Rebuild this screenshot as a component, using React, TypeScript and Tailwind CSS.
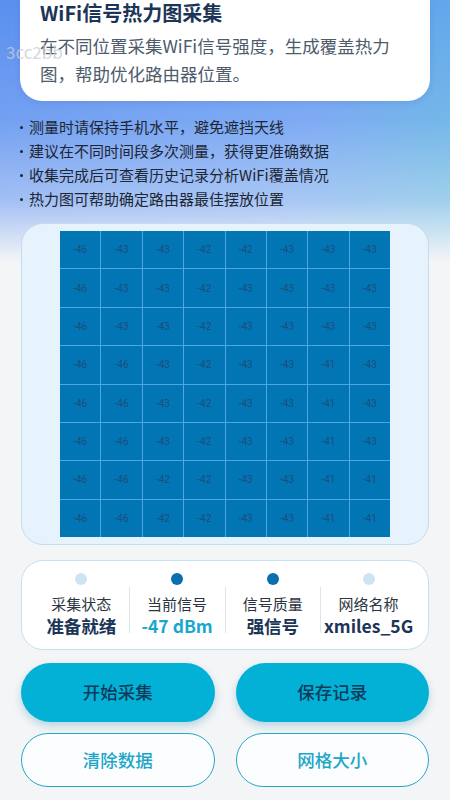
import React from "react";

const GRID: number[][] = [
  [-46, -43, -43, -42, -42, -43, -43, -43],
  [-46, -43, -43, -42, -43, -43, -43, -43],
  [-46, -43, -43, -42, -43, -43, -43, -43],
  [-46, -46, -43, -42, -43, -43, -41, -43],
  [-46, -46, -43, -42, -43, -43, -41, -43],
  [-46, -46, -43, -42, -43, -43, -41, -43],
  [-46, -46, -42, -42, -43, -43, -41, -41],
  [-46, -46, -42, -42, -43, -43, -41, -41],
];

const TIPS = [
  "测量时请保持手机水平，避免遮挡天线",
  "建议在不同时间段多次测量，获得更准确数据",
  "收集完成后可查看历史记录分析WiFi覆盖情况",
  "热力图可帮助确定路由器最佳摆放位置",
];

const STATS = [
  { label: "采集状态", value: "准备就绪", active: false, valueClass: "text-[#1c3557]" },
  { label: "当前信号", value: "-47 dBm", active: true, valueClass: "text-[#1ba7cc]" },
  { label: "信号质量", value: "强信号", active: true, valueClass: "text-[#1c3557]" },
  { label: "网络名称", value: "xmiles_5G", active: false, valueClass: "text-[#1c3557]" },
];

export default function App() {
  return (
    <div
      className="relative w-[450px] h-[800px] overflow-hidden bg-[linear-gradient(180deg,rgba(244,245,247,0)_0px,rgba(244,245,247,0.15)_120px,rgba(244,245,247,0.45)_200px,#f4f5f7_262px),linear-gradient(115deg,#5a8ff0_0%,#6a9ef3_45%,#3ecfc6_100%)]"
      style={{ fontFamily: '"Noto Sans CJK SC", "Noto Sans", sans-serif' }}
    >
      {/* Header card, scrolled so its top is off-screen */}
      <div className="mx-[20px] bg-white rounded-b-[22px] pl-[20px] pr-[30px] pb-[13px] shadow-[0_2px_6px_rgba(40,80,160,0.15)]">
        <h1 className="text-[20px] leading-[26px] font-bold text-[#1c3557]">WiFi信号热力图采集</h1>
        <p className="mt-[6px] text-[17.5px] leading-[28px] text-[#4d5b6b]">
          在不同位置采集WiFi信号强度，生成覆盖热力图，帮助优化路由器位置。
        </p>
      </div>

      {/* watermark */}
      <span className="absolute left-[6px] top-[41px] text-[17px] leading-[22px] text-[#c9ccd1]/80 select-none">3cc2bb</span>

      {/* Tips */}
      <ul className="mt-[14px] px-[20px]">
        {TIPS.map((t) => (
          <li key={t} className="flex items-center text-[15px] leading-[24px] text-[#1d2633]">
            <span className="w-[3px] h-[3px] rounded-full bg-[#1d2633] mr-[6px]" />
            {t}
          </li>
        ))}
      </ul>

      {/* Heatmap */}
      <div className="mt-[12px] mx-[21px] bg-[#e6f3fc] border-[1.5px] border-[#c2dcf0] rounded-[22px] py-[7px] flex justify-center">
        <div className="w-[330px] h-[306px] grid grid-cols-8 grid-rows-8 gap-px bg-[#4aa9e2]">
          {GRID.flatMap((row, ri) =>
            row.map((v, ci) => (
              <div
                key={`${ri}-${ci}`}
                className="bg-[#0276b5] flex items-center justify-center text-[10px] text-[#1d4d7a]"
                style={{ fontFamily: "Roboto, sans-serif" }}
              >
                {v}
              </div>
            ))
          )}
        </div>
      </div>

      {/* Stats */}
      <div className="mt-[15px] mx-[21px] bg-white border-[1.5px] border-[#c8dff0] rounded-[22px] px-[12px] pt-[12px] pb-[12px] flex items-center">
        {STATS.map((s, i) => (
          <React.Fragment key={s.label}>
            {i > 0 && <div className="w-px h-[46px] bg-[#dde6ee] mt-[10px]" />}
            <div className="flex-1 flex flex-col items-center">
              <span className={`w-[12px] h-[12px] rounded-full ${s.active ? "bg-[#0a6fae]" : "bg-[#cfe4f2]"}`} />
              <span className="mt-[9px] text-[15px] leading-[20px] text-[#2b3440]">{s.label}</span>
              <span className={`text-[17.5px] leading-[23px] font-bold ${s.valueClass}`}>{s.value}</span>
            </div>
          </React.Fragment>
        ))}
      </div>

      {/* Buttons */}
      <div className="mt-[13px] mx-[21px] grid grid-cols-2 gap-x-[21px] gap-y-[11px]">
        <button className="h-[59px] rounded-full bg-[#02b1d5] text-[17.5px] font-medium text-[#0f3a5a] shadow-[0_4px_8px_rgba(0,120,160,0.25)]">
          开始采集
        </button>
        <button className="h-[59px] rounded-full bg-[#02b1d5] text-[17.5px] font-medium text-[#0f3a5a] shadow-[0_4px_8px_rgba(0,120,160,0.25)]">
          保存记录
        </button>
        <button className="h-[54px] rounded-full bg-[#fbfdfe] border-[1.5px] border-[#23a7c6] text-[17.5px] font-medium text-[#1ca6c8]">
          清除数据
        </button>
        <button className="h-[54px] rounded-full bg-[#fbfdfe] border-[1.5px] border-[#23a7c6] text-[17.5px] font-medium text-[#1ca6c8]">
          网格大小
        </button>
      </div>
    </div>
  );
}
